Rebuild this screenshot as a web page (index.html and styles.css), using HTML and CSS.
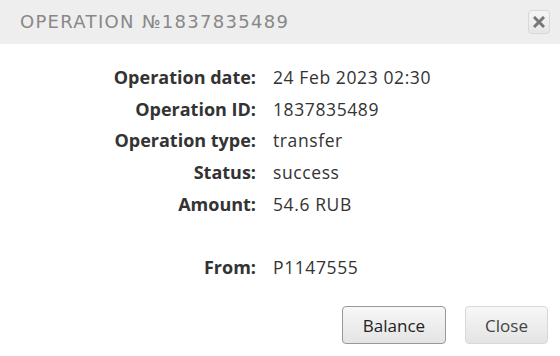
FILE: index.html
```html
<!DOCTYPE html>
<html lang="en">
<head>
    <meta charset="UTF-8">
    <title>Operation</title>
    <link rel="stylesheet" href="styles.css">
</head>
<body>

    <div class="dialog">
        <div class="dialog-header">
            <span class="dialog-title">OPERATION №1837835489</span>
            <button class="dialog-x" title="Close">
                <svg width="12" height="12" viewBox="0 0 12 12">
                    <path d="M2 2 L10 10 M10 2 L2 10" stroke="#777" stroke-width="3" stroke-linecap="square"/>
                </svg>
            </button>
        </div>

        <div class="details">
            <div class="label">Operation date:</div><div class="value">24 Feb 2023 02:30</div>
            <div class="label">Operation ID:</div><div class="value">1837835489</div>
            <div class="label">Operation type:</div><div class="value">transfer</div>
            <div class="label">Status:</div><div class="value">success</div>
            <div class="label">Amount:</div><div class="value">54.6 RUB</div>
            <div class="label">&nbsp;</div><div class="value">&nbsp;</div>
            <div class="label">From:</div><div class="value">P1147555</div>
        </div>

        <div class="dialog-buttons">
            <button class="btn btn-main">Balance</button>
            <button class="btn btn-close">Close</button>
        </div>
    </div>

</body>
</html>
```

FILE: styles.css
```css
body {
    margin: 0;
    padding: 0;
    background: #fff;
    font-family: "Open Sans", "DejaVu Sans", sans-serif;
    color: #333;
}

.dialog {
    width: 560px;
    height: 356px;
    display: flex;
    flex-direction: column;
}

.dialog-header {
    height: 44px;
    background: #eeeeee;
    display: flex;
    align-items: center;
    justify-content: space-between;
    padding: 0 10px 0 20px;
    box-sizing: border-box;
}

.dialog-title {
    font-family: "DejaVu Sans", sans-serif;
    font-size: 18px;
    letter-spacing: 1.3px;
    color: #888;
    margin-top: -2px;
}

.dialog-x {
    width: 22px;
    height: 24px;
    padding: 0;
    border: 1px solid #d8d8d8;
    border-radius: 4px;
    background: linear-gradient(#f6f6f6, #e6e6e6);
    display: flex;
    align-items: center;
    justify-content: center;
}

.details {
    display: grid;
    grid-template-columns: 256px auto;
    column-gap: 17px;
    margin-top: 18px;
    font-size: 17px;
    line-height: 31.67px;
}

.label {
    text-align: right;
    font-weight: 700;
    font-size: 18px;
    color: #333;
}

.value {
    color: #333;
    font-size: 17.5px;
    letter-spacing: 0.6px;
}

.dialog-buttons {
    margin-top: auto;
    display: flex;
    justify-content: flex-end;
    gap: 19px;
    padding: 0 12px 12px 0;
}

.btn {
    height: 38px;
    padding: 0;
    font-family: "Open Sans", "DejaVu Sans", sans-serif;
    font-size: 17px;
    color: #444;
    border: 1px solid #d8d8d8;
    border-radius: 4px;
    background: linear-gradient(#f7f7f7, #e4e4e4);
}

.btn-main {
    color: #222;
    border-color: #999;
    width: 104px;
}

.btn-close {
    width: 83px;
}
```
